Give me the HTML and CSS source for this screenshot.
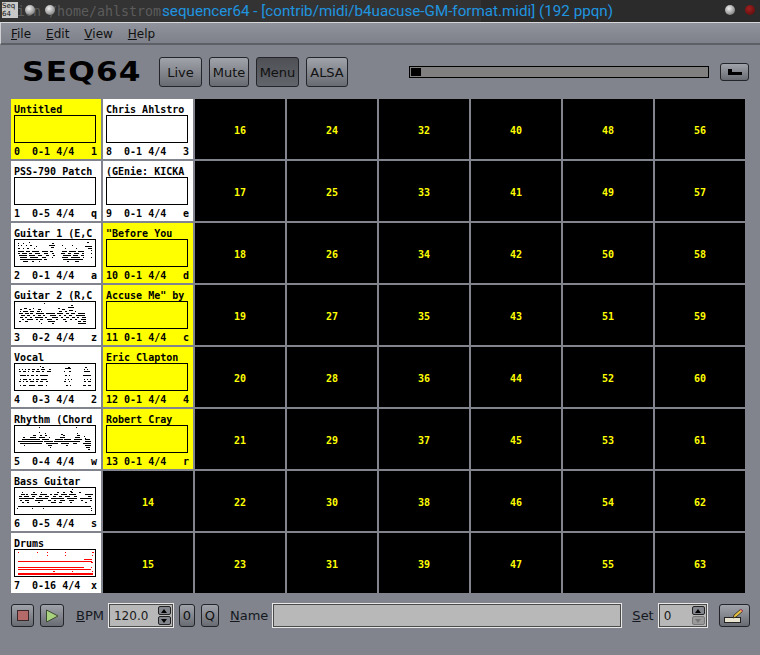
FILE: index.html
```html
<!DOCTYPE html>
<html lang="en">
<head>
    <meta charset="UTF-8">
    <title>sequencer64</title>
    <link rel="stylesheet" href="styles.css">
</head>
<body>
    <div class="titlebar">
        <div class="ghost">ion /home/ahlstrom</div>
        <div class="wm-icon">Seq<br>64</div>
        <span class="wm-dot dot-a"></span>
        <span class="wm-dot dot-b"></span>
        <div class="title">sequencer64 - [contrib/midi/b4uacuse-GM-format.midi] (192 ppqn)</div>
        <span class="wm-dot dot-c"></span>
        <span class="wm-dot dot-d"></span>
    </div>

    <div class="menubar">
        <span class="menu-item"><u>F</u>ile</span>
        <span class="menu-item"><u>E</u>dit</span>
        <span class="menu-item"><u>V</u>iew</span>
        <span class="menu-item"><u>H</u>elp</span>
    </div>

    <div class="toolbar">
        <div class="logo">SEQ64</div>
        <div class="toolbar-buttons">
            <button class="btn live">Live</button>
            <button class="btn mute">Mute</button>
            <button class="btn menu active">Menu</button>
            <button class="btn alsa">ALSA</button>
        </div>
        <div class="progress"><div class="progress-block"></div></div>
        <button class="btn loop-btn">
            <svg width="14" height="6" viewBox="0 0 14 6"><path d="M0 0h4v3h10v3H0z" fill="#000"/></svg>
        </button>
    </div>

    <div class="grid">
        <div class="cell on">
            <div class="cell-title">Untitled</div>
            <div class="cell-box"></div>
            <div class="cell-foot"><span>0  0-1 4/4</span><span>1</span></div>
        </div>
        <div class="cell">
            <div class="cell-title">PSS-790 Patch</div>
            <div class="cell-box"></div>
            <div class="cell-foot"><span>1  0-5 4/4</span><span>q</span></div>
        </div>
        <div class="cell">
            <div class="cell-title">Guitar 1 (E,C</div>
            <div class="cell-box">
                <svg class="notes" viewBox="0 0 80 26">
                    <path d="M3 3h1M8 3h1M14 2h1M37 3h2M72 2h2M3 5h1M6 5h1M11 5h1M15 5h2M21 6h1M34 5h6M47 5h1M57 5h1M70 6h7M3 8h2M8 8h1M12 8h2M19 8h1M36 7h3M50 8h1M61 8h1M73 8h4M76 10h1M3 11h6M11 11h4M17 11h7M27 11h6M35 11h3M47 11h5M54 11h7M63 11h6M3 13h2M7 13h5M14 13h3M20 13h5M29 13h4M37 13h2M46 13h4M53 13h3M59 13h5M67 13h2M76 13h1M4 15h8M14 15h6M23 15h4M31 15h3M38 15h2M48 15h8M58 15h5M66 15h3M5 17h7M15 17h8M27 17h4M37 17h1M47 17h6M56 17h9M68 17h1M76 17h1M5 19h22M29 19h3M48 19h20M8 21h5M17 21h2M24 21h1M52 21h2M60 21h4"/>
                </svg>
            </div>
            <div class="cell-foot"><span>2  0-1 4/4</span><span>a</span></div>
        </div>
        <div class="cell">
            <div class="cell-title">Guitar 2 (R,C</div>
            <div class="cell-box">
                <svg class="notes" viewBox="0 0 80 26">
                    <path d="M29 1h1M56 3h2M5 7h2M9 6h3M14 7h2M18 6h1M23 7h3M43 6h2M47 7h3M53 5h6M5 9h1M8 9h5M15 9h4M22 9h3M26 9h1M44 9h3M50 9h2M54 8h4M60 9h1M4 11h4M10 11h4M15 11h3M21 11h8M31 11h9M42 11h6M51 11h3M56 11h4M63 11h7M6 13h4M12 13h3M18 13h2M23 13h3M28 13h2M35 13h6M44 13h2M49 13h2M54 13h3M61 13h9M5 15h3M10 15h2M15 15h2M20 15h8M30 15h2M37 15h6M46 15h2M51 15h3M57 15h3M62 15h2M67 15h4M7 17h2M12 17h6M21 17h2M25 17h3M32 17h5M41 17h2M48 17h3M55 17h2M60 17h2M66 17h5M4 19h2M10 19h3M24 19h1M33 19h7M50 19h2M63 19h3M68 19h3M26 21h1M37 21h2M63 21h8"/>
                </svg>
            </div>
            <div class="cell-foot"><span>3  0-2 4/4</span><span>z</span></div>
        </div>
        <div class="cell">
            <div class="cell-title">Vocal</div>
            <div class="cell-box">
                <svg class="notes" viewBox="0 0 80 26">
                    <path d="M25 2h1M27 3h2M19 5h1M53 3h2M70 3h2M4 5h1M7 5h1M10 5h1M13 5h2M17 5h2M22 5h2M26 5h4M34 5h2M50 4h6M69 5h1M72 5h1M4 7h2M8 7h3M13 7h1M17 7h2M21 7h4M27 7h2M32 7h4M49 7h1M54 7h2M69 7h6M5 11h6M12 11h2M16 11h3M21 11h2M25 11h8M50 11h2M54 11h1M68 11h8M5 15h1M8 15h4M14 15h2M18 15h1M21 15h3M26 15h6M50 15h1M53 15h1M56 15h1M69 15h1M72 15h1M75 15h1M4 17h2M8 17h1M11 17h2M15 17h4M21 17h2M25 17h3M31 17h2M49 17h2M54 17h1M69 17h2M73 17h3M5 21h1M8 21h3M14 21h6M23 21h5M31 21h1M51 21h2M55 21h1M68 21h3M73 21h3"/>
                </svg>
            </div>
            <div class="cell-foot"><span>4  0-3 4/4</span><span>2</span></div>
        </div>
        <div class="cell">
            <div class="cell-title">Rhythm (Chord</div>
            <div class="cell-box">
                <svg class="notes" viewBox="0 0 80 26">
                    <path d="M24 1h1M61 1h1M24 6h1M30 7h1M62 7h1M46 8h2M18 9h3M25 9h2M30 9h2M48 9h2M62 9h3M69 10h1M8 11h2M15 11h6M24 11h6M34 11h1M45 11h5M60 11h5M70 12h1M7 13h8M15 13h10M27 13h7M40 13h8M49 13h7M59 13h8M70 13h5M3 15h25M29 15h9M39 15h26M70 15h6M5 17h22M31 17h12M46 17h8M58 17h4M68 17h8M9 19h1M33 19h4M51 19h2M70 19h6M35 21h1M71 21h4M73 23h2"/>
                </svg>
            </div>
            <div class="cell-foot"><span>5  0-4 4/4</span><span>w</span></div>
        </div>
        <div class="cell">
            <div class="cell-title">Bass Guitar</div>
            <div class="cell-box">
                <svg class="notes" viewBox="0 0 80 26">
                    <path d="M57 1h1M55 3h2M7 4h1M18 4h2M26 4h1M42 4h2M48 4h2M56 4h2M64 4h2M6 6h4M11 6h2M16 6h6M25 6h7M35 6h2M39 6h4M46 6h6M54 6h7M70 6h8M4 8h3M9 8h5M17 8h3M24 8h3M30 8h4M38 8h3M44 8h3M50 8h5M59 8h3M73 8h3M4 10h15M21 10h12M36 10h13M52 10h10M65 10h12M5 12h2M10 12h4M20 12h8M33 12h3M39 12h2M45 12h5M54 12h5M66 12h2M75 12h2M7 14h2M12 14h2M23 14h2M36 14h5M44 14h3M55 14h2M70 14h2M3 18h73M2 20h1M17 20h1M28 20h1M76 20h1M76 22h1"/>
                </svg>
            </div>
            <div class="cell-foot"><span>6  0-5 4/4</span><span>s</span></div>
        </div>
        <div class="cell">
            <div class="cell-title">Drums</div>
            <div class="cell-box">
                <svg class="notes red" viewBox="0 0 80 26">
                    <path d="M3 2h1M22 2h1M32 2h1M50 2h1M77 2h2M32 5h1M50 5h1M77 5h1M69 9h8M3 11h74M76 12h2M3 17h66M76 17h1M3 19h73M38 21h2M57 21h1M77 21h1"/>
                    <path class="thick" d="M3 24h75"/>
                </svg>
            </div>
            <div class="cell-foot"><span>7  0-16 4/4</span><span>x</span></div>
        </div>

        <div class="cell">
            <div class="cell-title">Chris Ahlstro</div>
            <div class="cell-box"></div>
            <div class="cell-foot"><span>8  0-1 4/4</span><span>3</span></div>
        </div>
        <div class="cell">
            <div class="cell-title">(GEnie: KICKA</div>
            <div class="cell-box"></div>
            <div class="cell-foot"><span>9  0-1 4/4</span><span>e</span></div>
        </div>
        <div class="cell on">
            <div class="cell-title">"Before You</div>
            <div class="cell-box"></div>
            <div class="cell-foot"><span>10 0-1 4/4</span><span>d</span></div>
        </div>
        <div class="cell on">
            <div class="cell-title">Accuse Me" by</div>
            <div class="cell-box"></div>
            <div class="cell-foot"><span>11 0-1 4/4</span><span>c</span></div>
        </div>
        <div class="cell on">
            <div class="cell-title">Eric Clapton</div>
            <div class="cell-box"></div>
            <div class="cell-foot"><span>12 0-1 4/4</span><span>4</span></div>
        </div>
        <div class="cell on">
            <div class="cell-title">Robert Cray</div>
            <div class="cell-box"></div>
            <div class="cell-foot"><span>13 0-1 4/4</span><span>r</span></div>
        </div>
        <div class="cell empty">14</div>
        <div class="cell empty">15</div>

        <div class="cell empty">16</div><div class="cell empty">17</div><div class="cell empty">18</div><div class="cell empty">19</div>
        <div class="cell empty">20</div><div class="cell empty">21</div><div class="cell empty">22</div><div class="cell empty">23</div>
        <div class="cell empty">24</div><div class="cell empty">25</div><div class="cell empty">26</div><div class="cell empty">27</div>
        <div class="cell empty">28</div><div class="cell empty">29</div><div class="cell empty">30</div><div class="cell empty">31</div>
        <div class="cell empty">32</div><div class="cell empty">33</div><div class="cell empty">34</div><div class="cell empty">35</div>
        <div class="cell empty">36</div><div class="cell empty">37</div><div class="cell empty">38</div><div class="cell empty">39</div>
        <div class="cell empty">40</div><div class="cell empty">41</div><div class="cell empty">42</div><div class="cell empty">43</div>
        <div class="cell empty">44</div><div class="cell empty">45</div><div class="cell empty">46</div><div class="cell empty">47</div>
        <div class="cell empty">48</div><div class="cell empty">49</div><div class="cell empty">50</div><div class="cell empty">51</div>
        <div class="cell empty">52</div><div class="cell empty">53</div><div class="cell empty">54</div><div class="cell empty">55</div>
        <div class="cell empty">56</div><div class="cell empty">57</div><div class="cell empty">58</div><div class="cell empty">59</div>
        <div class="cell empty">60</div><div class="cell empty">61</div><div class="cell empty">62</div><div class="cell empty">63</div>
    </div>

    <div class="bottombar">
        <button class="btn stop-btn"><span class="stop-icon"></span></button>
        <button class="btn play-btn">
            <svg width="14" height="14" viewBox="0 0 14 14"><path d="M1.5 1v12L13 7z" fill="#a9d27f" stroke="#3c4a30"/></svg>
        </button>
        <span class="label bpm-label"><u>B</u>PM</span>
        <div class="entry spin bpm-spin">
            <span>120.0</span>
            <div class="spin-arrows">
                <span class="arrow"><i class="up"></i></span>
                <span class="arrow"><i class="down"></i></span>
            </div>
        </div>
        <button class="btn zero-btn">0</button>
        <button class="btn q-btn">Q</button>
        <span class="label name-label"><u>N</u>ame</span>
        <div class="entry name-entry"></div>
        <span class="label set-label"><u>S</u>et</span>
        <div class="entry spin set-spin">
            <span>0</span>
            <div class="spin-arrows">
                <span class="arrow"><i class="up"></i></span>
                <span class="arrow off"><i class="down"></i></span>
            </div>
        </div>
        <button class="btn edit-btn">
            <svg width="20" height="16" viewBox="0 0 20 16">
                <rect x="0.5" y="9.5" width="16" height="5" fill="#e8e4d0" stroke="#222"/>
                <path d="M9 10l1-3 7-6 2 2-7 6z" fill="#e8c23c" stroke="#222" stroke-width="0.8"/>
                <path d="M16 2l1-1 2 2-1 1z" fill="#e0607a"/>
            </svg>
        </button>
    </div>
</body>
</html>
```

FILE: styles.css
```css
html, body {
    margin: 0;
    padding: 0;
    height: 655px;
    overflow: hidden;
}
body {
    width: 760px;
    background-color: #81848c;
    color: #111;
    font-family: "DejaVu Sans", sans-serif;
    font-size: 13px;
    display: flex;
    flex-direction: column;
}

/* window manager strip */
.titlebar {
    position: relative;
    height: 22px;
    flex: none;
    background: linear-gradient(to right, #333 0, #333 481px, #2b2b2b 481px);
    border-bottom: 1px solid #d8d8d8;
    overflow: hidden;
}
.ghost {
    position: absolute;
    left: 17px;
    top: 4px;
    font-family: "DejaVu Sans Mono", monospace;
    font-size: 13.3px;
    color: #5c5c5c;
    white-space: nowrap;
}
.wm-icon {
    position: absolute;
    left: 2px;
    top: 2px;
    width: 16px;
    height: 16px;
    background: #c8c8c8;
    color: #111;
    font-size: 7px;
    line-height: 8px;
    overflow: hidden;
}
.wm-dot {
    position: absolute;
    top: 5px;
    width: 10px;
    height: 10px;
    border-radius: 50%;
    background: radial-gradient(circle at 40% 35%, #f0f0f0, #8a8a8a 70%, #555);
}
.dot-a { left: 25px; }
.dot-b { left: 45px; }
.dot-c { left: 725px; }
.dot-d {
    left: 745px;
    background: radial-gradient(circle at 40% 35%, #a02020, #6a1010 70%, #401010);
}
.title {
    position: absolute;
    left: 162px;
    top: 1px;
    font-family: Roboto, sans-serif;
    font-size: 15.2px;
    line-height: 21px;
    color: #1f95e0;
    white-space: nowrap;
}

.menubar {
    height: 22px;
    flex: none;
    display: flex;
    align-items: center;
    padding: 1px 0 0 10px;
    gap: 15px;
    font-size: 12px;
    background: linear-gradient(#90939b, #7e8189);
    border-left: 1px solid #cfd0d4;
    border-bottom: 2px solid #5d6067;
    box-sizing: border-box;
}

.toolbar {
    height: 54px;
    flex: none;
    display: flex;
    align-items: center;
    box-sizing: border-box;
    padding: 0 11px 0 22px;
}
.logo {
    width: 137px;
    flex: none;
    font-family: "DejaVu Sans", sans-serif;
    font-weight: bold;
    font-size: 26px;
    letter-spacing: 1px;
    color: #000;
    transform: scaleX(1.2);
    transform-origin: left center;
}
.toolbar-buttons {
    display: flex;
    gap: 7px;
    width: 250px;
    flex: none;
}
.btn {
    font-family: "DejaVu Sans", sans-serif;
    font-size: 13px;
    color: #111;
    padding: 0;
    height: 30px;
    border: 1px solid #23252a;
    border-radius: 3px;
    background: linear-gradient(#a0a3aa, #686b72);
    display: flex;
    align-items: center;
    justify-content: center;
    box-sizing: border-box;
}
.btn.active {
    background: linear-gradient(#4e5055, #62656b);
}
.live { width: 43px; }
.mute { width: 40px; }
.menu { width: 43px; }
.alsa { width: 42px; }
.progress {
    width: 300px;
    height: 12px;
    flex: none;
    box-sizing: border-box;
    border: 1px solid #000;
    background: #808080;
    padding: 1px;
}
.progress-block {
    width: 10px;
    height: 8px;
    background: #000;
}
.loop-btn {
    width: 29px;
    height: 18px;
    margin-left: 11px;
}

.grid {
    display: grid;
    grid-template-columns: repeat(8, 90px);
    grid-template-rows: repeat(8, 60px);
    grid-auto-flow: column;
    gap: 2px;
    margin-left: 11px;
    flex: none;
}
.cell {
    background: #fff;
    color: #000;
    font-family: "DejaVu Sans Mono", monospace;
    font-size: 10px;
    font-weight: bold;
    padding: 0 3px;
    box-sizing: border-box;
    display: flex;
    flex-direction: column;
    overflow: hidden;
}
.cell.on {
    background: #ffff00;
}
.cell.empty {
    background: #000;
    color: #ffff00;
    align-items: center;
    justify-content: center;
    padding-top: 2px;
}
.cell-title {
    height: 16px;
    line-height: 22px;
    white-space: pre;
}
.cell-box {
    width: 82px;
    height: 28px;
    flex: none;
    box-sizing: border-box;
    border: 1px solid #000;
}
.cell-foot {
    display: flex;
    justify-content: space-between;
    line-height: 18px;
    padding-right: 1px;
    white-space: pre;
}
.notes {
    display: block;
    width: 80px;
    height: 26px;
    fill: none;
    stroke: #000;
    stroke-width: 1;
    shape-rendering: crispEdges;
}
.notes.red { stroke: #ff0000; }
.notes .thick { stroke-width: 2; }

.bottombar {
    display: flex;
    align-items: center;
    height: 25px;
    margin-top: 10px;
    padding-left: 11px;
    flex: none;
}
.bottombar .btn { height: 23px; }
.stop-btn { width: 23px; }
.stop-icon {
    width: 10px;
    height: 9px;
    background: #b56a6a;
    border: 1px solid #3a2626;
}
.play-btn { width: 24px; margin-left: 6px; }
.label { font-size: 13px; color: #14181f; }
.bpm-label { margin-left: 12px; }
.entry {
    height: 25px;
    box-sizing: border-box;
    border: 1px solid #e8e8e8;
    outline: 1px solid #4a4a4a;
    outline-offset: -2px;
    background: #b8b8b8;
}
.spin {
    display: flex;
    align-items: center;
    justify-content: space-between;
    padding: 0 2px 0 5px;
    color: #1a1a1a;
    font-size: 12px;
}
.bpm-spin { width: 66px; margin-left: 4px; }
.spin-arrows {
    display: flex;
    flex-direction: column;
    gap: 1px;
}
.arrow {
    width: 13px;
    height: 9px;
    display: flex;
    align-items: center;
    justify-content: center;
    border: 1px solid #222;
    border-radius: 2px;
    background: #83868d;
    box-sizing: border-box;
}
.arrow.off {
    border-color: #777;
    background: #9a9a9a;
}
.arrow i {
    width: 0;
    height: 0;
    border-left: 3px solid transparent;
    border-right: 3px solid transparent;
}
.arrow .up { border-bottom: 4px solid #000; }
.arrow .down { border-top: 4px solid #000; }
.arrow.off .down { border-top-color: #777; }
.zero-btn { width: 16px; margin-left: 5px; }
.q-btn { width: 18px; margin-left: 6px; }
.name-label { margin-left: 11px; }
.name-entry { width: 350px; margin-left: 4px; }
.set-label { margin-left: 10px; }
.set-spin { width: 50px; margin-left: 4px; }
.edit-btn { width: 31px; margin-left: 11px; }
```
